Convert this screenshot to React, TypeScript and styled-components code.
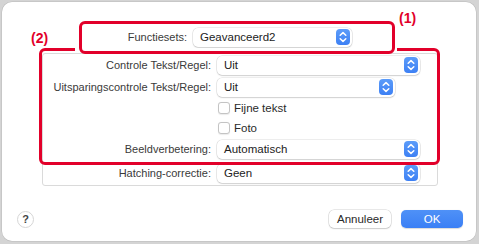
import React from "react";
import styled, { createGlobalStyle } from "styled-components";

const RED = "#e2002a";

const GlobalStyle = createGlobalStyle`
  html, body {
    margin: 0;
    padding: 0;
    background: #d4d4d4;
    font-family: "Liberation Sans", Arial, sans-serif;
  }
`;

const Stepper = () => (
  <StepIcon>
    <svg width="14" height="16" viewBox="0 0 14 16">
      <path d="M4.2 6.2 L7 3.6 L9.8 6.2" fill="none" stroke="#fff" strokeWidth="1.5" strokeLinecap="round" strokeLinejoin="round" />
      <path d="M4.2 9.8 L7 12.4 L9.8 9.8" fill="none" stroke="#fff" strokeWidth="1.5" strokeLinecap="round" strokeLinejoin="round" />
    </svg>
  </StepIcon>
);

const Select = ({ value, width }: { value: string; width: number }) => (
  <SelectBox $width={width}>
    <SelectText>{value}</SelectText>
    <Stepper />
  </SelectBox>
);

const App = () => {
  return (
    <>
      <GlobalStyle />
      <Page>
        <Dialog>
          <Callout $left={397} $top={8}>(1)</Callout>
          <Callout $left={29} $top={28}>(2)</Callout>
          <OuterMark />
          <TopMark />

          <TopRow>
            <Label $width={185}>Functiesets:</Label>
            <Select value="Geavanceerd2" width={159} />
          </TopRow>

          <GroupBox>
            <Row>
              <Label $width={168}>Controle Tekst/Regel:</Label>
              <Select value="Uit" width={203} />
            </Row>
            <Row>
              <Label $width={168}>Uitsparingscontrole Tekst/Regel:</Label>
              <Select value="Uit" width={178} />
            </Row>
            <CheckRow>
              <Check />
              <CheckText>Fijne tekst</CheckText>
            </CheckRow>
            <CheckRow>
              <Check />
              <CheckText>Foto</CheckText>
            </CheckRow>
            <Row>
              <Label $width={168}>Beeldverbetering:</Label>
              <Select value="Automatisch" width={203} />
            </Row>
            <Row $gapTop={2}>
              <Label $width={168}>Hatching-correctie:</Label>
              <Select value="Geen" width={203} />
            </Row>
          </GroupBox>

          <Footer>
            <HelpButton>?</HelpButton>
            <Buttons>
              <Button>Annuleer</Button>
              <Button $primary>OK</Button>
            </Buttons>
          </Footer>
        </Dialog>
      </Page>
    </>
  );
};

export default App;

const Page = styled.div`
  width: 479px;
  height: 244px;
  padding: 2px 3px 3px 2px;
  box-sizing: border-box;
`;

const Dialog = styled.div`
  position: relative;
  width: 474px;
  height: 239px;
  background: #fff;
  border-radius: 10px;
  box-shadow: 0 0 0 0.5px rgba(0, 0, 0, 0.12);
  display: flex;
  flex-direction: column;
  padding-top: 25px;
  box-sizing: border-box;
  color: #333;
  font-size: 11px;
`;

const Callout = styled.div<{ $left: number; $top: number }>`
  position: absolute;
  left: ${(p) => p.$left}px;
  top: ${(p) => p.$top}px;
  color: ${RED};
  font-weight: 700;
  font-size: 14px;
  line-height: 16px;
`;

const OuterMark = styled.div`
  position: absolute;
  left: 37px;
  top: 46px;
  width: 401px;
  height: 117px;
  box-sizing: border-box;
  border: 3px solid ${RED};
  border-radius: 6px;
  z-index: 4;
  pointer-events: none;
  &::before {
    content: "";
    position: absolute;
    left: 33px;
    top: -3px;
    width: 322px;
    height: 3px;
    background: #fff;
  }
`;

const TopMark = styled.div`
  position: absolute;
  left: 77px;
  top: 19px;
  width: 316px;
  height: 33px;
  box-sizing: border-box;
  border: 3px solid ${RED};
  border-radius: 6px;
  z-index: 5;
  pointer-events: none;
`;

const TopRow = styled.div`
  display: flex;
  align-items: center;
  height: 20px;
  gap: 6px;
`;

const Label = styled.div<{ $width: number }>`
  width: ${(p) => p.$width}px;
  flex: none;
  text-align: right;
  white-space: nowrap;
  color: #3a3a3a;
`;

const SelectBox = styled.div<{ $width: number }>`
  width: ${(p) => p.$width}px;
  height: 19px;
  box-sizing: border-box;
  display: flex;
  align-items: center;
  justify-content: space-between;
  padding: 0 2px 0 7px;
  background: #fff;
  border-radius: 5px;
  box-shadow: 0 0 0 0.5px rgba(0, 0, 0, 0.14), 0 1px 1.5px rgba(0, 0, 0, 0.12);
`;

const SelectText = styled.span`
  color: #222;
  font-size: 11.5px;
`;

const StepIcon = styled.span`
  display: flex;
  width: 14px;
  height: 16px;
  border-radius: 4px;
  background: linear-gradient(#5c9cf9, #3d80f4);
`;

const GroupBox = styled.div`
  margin: 6px 0 0 40px;
  width: 396px;
  box-sizing: border-box;
  border: 1px solid #dadada;
  border-radius: 3px;
  padding: 0 0 1px;
  display: flex;
  flex-direction: column;
`;

const Row = styled.div<{ $gapTop?: number }>`
  display: flex;
  align-items: center;
  gap: 6px;
  height: 22px;
  margin-top: ${(p) => p.$gapTop ?? 0}px;
`;

const CheckRow = styled.div`
  display: flex;
  align-items: center;
  height: 20px;
  padding-left: 175px;
  gap: 4px;
`;

const Check = styled.span`
  width: 12px;
  height: 12px;
  box-sizing: border-box;
  border: 1px solid #c4c4c4;
  border-radius: 3px;
  background: #fff;
  box-shadow: 0 0.5px 1px rgba(0, 0, 0, 0.08);
`;

const CheckText = styled.span`
  color: #2a2a2a;
  font-size: 11.5px;
`;

const Footer = styled.div`
  margin-top: auto;
  display: flex;
  align-items: center;
  justify-content: space-between;
  padding: 0 13px 13px 15px;
`;

const HelpButton = styled.div`
  width: 17px;
  height: 17px;
  border-radius: 50%;
  box-sizing: border-box;
  border: 1px solid #d6d6d6;
  background: #fff;
  display: flex;
  align-items: center;
  justify-content: center;
  font-size: 11px;
  font-weight: 700;
  color: #444;
`;

const Buttons = styled.div`
  display: flex;
  gap: 10px;
`;

const Button = styled.div<{ $primary?: boolean }>`
  width: 62px;
  height: 18px;
  border-radius: 5px;
  display: flex;
  align-items: center;
  justify-content: center;
  font-size: 11.5px;
  color: ${(p) => (p.$primary ? "#fff" : "#2a2a2a")};
  background: ${(p) => (p.$primary ? "linear-gradient(#4f91f7, #3a7ff5)" : "#fff")};
  box-shadow: ${(p) =>
    p.$primary
      ? "0 0.5px 1px rgba(0, 0, 0, 0.15)"
      : "0 0 0 0.5px rgba(0, 0, 0, 0.18), 0 1px 1.5px rgba(0, 0, 0, 0.12)"};
`;
